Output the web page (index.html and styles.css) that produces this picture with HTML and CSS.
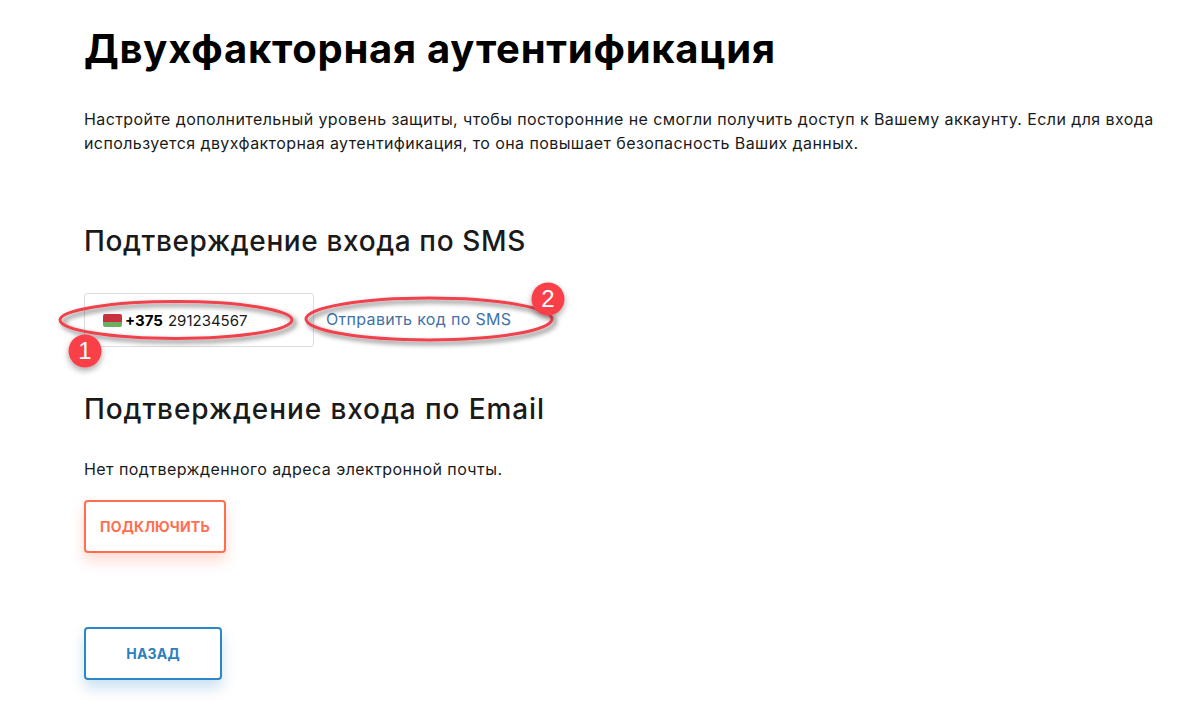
FILE: index.html
```html
<!DOCTYPE html>
<html lang="ru">
<head>
    <meta charset="UTF-8">
    <meta name="viewport" content="width=device-width, initial-scale=1.0">
    <title>Двухфакторная аутентификация</title>
    <link rel="stylesheet" href="styles.css">
</head>
<body>
    <main class="page">
        <h1 class="title">Двухфакторная аутентификация</h1>
        <p class="intro">Настройте дополнительный уровень защиты, чтобы посторонние не смогли получить доступ к Вашему аккаунту. Если для входа используется двухфакторная аутентификация, то она повышает безопасность Ваших данных.</p>

        <h2 class="subtitle sms-title">Подтверждение входа по SMS</h2>
        <div class="phone-row">
            <div class="phone-box">
                <span class="flag"><span class="flag-red"></span><span class="flag-green"></span></span>
                <b class="code">+375</b>
                <span class="number">291234567</span>
            </div>
            <a class="send-link">Отправить код по SMS</a>
        </div>

        <h2 class="subtitle email-title">Подтверждение входа по Email</h2>
        <p class="email-note">Нет подтвержденного адреса электронной почты.</p>
        <button class="btn btn-orange">ПОДКЛЮЧИТЬ</button>
        <button class="btn btn-blue">НАЗАД</button>
    </main>

    <!-- пометки поверх скриншота -->
    <svg class="marks" width="1200" height="701" viewBox="0 0 1200 701">
        <defs>
            <filter id="soft" x="-20%" y="-50%" width="140%" height="200%">
                <feDropShadow dx="3" dy="3" stdDeviation="2.5" flood-color="#000" flood-opacity="0.55"/>
            </filter>
            <filter id="badge" x="-40%" y="-40%" width="180%" height="180%">
                <feDropShadow dx="0" dy="3" stdDeviation="3" flood-color="#000" flood-opacity="0.35"/>
            </filter>
        </defs>
        <ellipse class="ring" cx="176" cy="320" rx="116" ry="18.5" filter="url(#soft)"/>
        <ellipse class="ring" cx="429" cy="319" rx="123" ry="21" filter="url(#soft)"/>
        <circle class="dot" cx="85" cy="351" r="16.5" filter="url(#badge)"/>
        <circle class="dot" cx="548" cy="299" r="16.5" filter="url(#badge)"/>
        <text class="dot-num" x="85" y="359">1</text>
        <text class="dot-num" x="548" y="307">2</text>
    </svg>
</body>
</html>
```

FILE: styles.css
```css
body{
    margin: 0;
    background: #fff;
    color: #1a1a1a;
    font-family: "Inter", "Noto Sans", sans-serif;
}
.page{
    padding: 24px 0 0 84px;
    height: 677px;
    overflow: hidden;
}
.title{
    margin: 0;
    font-size: 40px;
    line-height: 50px;
    font-weight: 700;
    letter-spacing: 0.75px;
    color: #000;
}
.intro{
    margin: 33px 0 0;
    width: 1080px;
    font-size: 16px;
    line-height: 24px;
    letter-spacing: 0.41px;
}
.subtitle{
    margin: 0;
    font-size: 28px;
    line-height: 36px;
    font-weight: 500;
    letter-spacing: 0.7px;
}
.sms-title{
    margin-top: 68px;
    letter-spacing: 0.62px;
}
.email-title{
    margin-top: 44px;
    letter-spacing: 0.9px;
}
.phone-row{
    display: flex;
    align-items: center;
    margin-top: 34px;
}
.phone-box{
    display: flex;
    align-items: center;
    box-sizing: border-box;
    width: 230px;
    height: 54px;
    padding-left: 18px;
    border: 1px solid #ddd;
    border-radius: 3px;
    font-size: 15px;
}
.flag{
    display: flex;
    flex-direction: column;
    width: 19px;
    height: 13px;
    margin-right: 3px;
    border-radius: 2px;
    overflow: hidden;
}
.flag-red{
    flex: 2;
    background: #c8313e;
}
.flag-green{
    flex: 1;
    background: #6fae5d;
}
.code{
    margin-right: 5px;
    color: #000;
}
.send-link{
    margin: -2px 0 0 12px;
    font-size: 16px;
    letter-spacing: 0.33px;
    color: #3f72a8;
}
.email-note{
    margin: 32px 0 0;
    font-size: 16px;
    line-height: 20px;
    letter-spacing: 0.44px;
}
.btn{
    display: block;
    box-sizing: border-box;
    height: 53px;
    background: #fff;
    border-radius: 4px;
    font-family: inherit;
    font-size: 14px;
    font-weight: 700;
    letter-spacing: 0.2px;
}
.btn-orange{
    width: 142px;
    margin-top: 21px;
    border: 2px solid #ff6f4f;
    color: #ff6f4f;
    box-shadow: 0 8px 14px rgba(255, 111, 79, 0.25);
}
.btn-blue{
    width: 138px;
    margin-top: 74px;
    border: 2px solid #2b87c8;
    color: #2b80bf;
    box-shadow: 0 8px 14px rgba(43, 135, 200, 0.25);
}
.marks{
    position: absolute;
    top: 0;
    left: 0;
    pointer-events: none;
}
.ring{
    fill: none;
    stroke: #f0434e;
    stroke-width: 3;
}
.dot{
    fill: #f9404a;
}
.dot-num{
    fill: #fff;
    font-family: "Liberation Sans", sans-serif;
    font-size: 24px;
    text-anchor: middle;
}
```
